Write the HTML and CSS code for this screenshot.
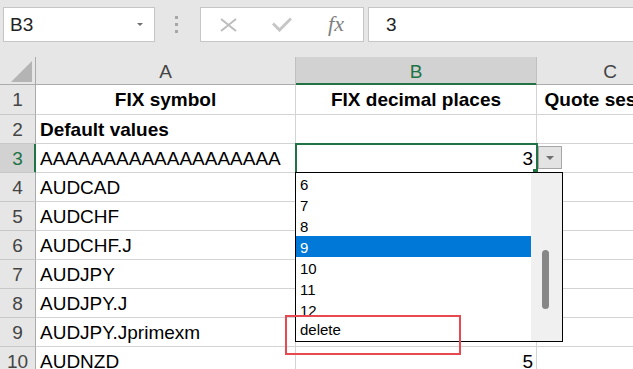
FILE: index.html
```html
<!DOCTYPE html>
<html lang="en">
<head>
  <meta charset="UTF-8">
  <title>FIX symbols</title>
  <link rel="stylesheet" href="styles.css">
</head>
<body>
  <div class="formula-bar">
    <div class="name-box"><span>B3</span><span class="caret"></span></div>
    <div class="grip"><i></i><i></i><i></i></div>
    <div class="fx-buttons">
      <span class="fx-btn">
        <svg width="17" height="14" viewBox="0 0 17 14"><path d="M1 1 L16 13 M16 1 L1 13" stroke="#bdbdbd" stroke-width="2" fill="none"/></svg>
      </span>
      <span class="fx-btn">
        <svg width="20" height="15" viewBox="0 0 20 15"><path d="M1 6.5 L7.5 13 L19 1.5" stroke="#c6c6c6" stroke-width="3" fill="none"/></svg>
      </span>
      <span class="fx-btn fx-label">fx</span>
    </div>
    <div class="formula-input">3</div>
  </div>

  <div class="sheet">
    <div class="grid">
      <div class="cell corner">
        <svg width="21" height="21" viewBox="0 0 21 21"><path d="M21 0 L21 21 L0 21 Z" fill="#b4b4b4"/></svg>
      </div>
      <div class="cell col-head">A</div>
      <div class="cell col-head active">B</div>
      <div class="cell col-head">C</div>

      <div class="cell row-head">1</div>
      <div class="cell b center">FIX symbol</div>
      <div class="cell b center">FIX decimal places</div>
      <div class="cell b center">Quote session</div>

      <div class="cell row-head">2</div>
      <div class="cell b">Default values</div>
      <div class="cell"></div>
      <div class="cell"></div>

      <div class="cell row-head active">3</div>
      <div class="cell">AAAAAAAAAAAAAAAAAAA</div>
      <div class="cell right current">3</div>
      <div class="cell"></div>

      <div class="cell row-head">4</div>
      <div class="cell">AUDCAD</div>
      <div class="cell"></div>
      <div class="cell"></div>

      <div class="cell row-head">5</div>
      <div class="cell">AUDCHF</div>
      <div class="cell"></div>
      <div class="cell"></div>

      <div class="cell row-head">6</div>
      <div class="cell">AUDCHF.J</div>
      <div class="cell"></div>
      <div class="cell"></div>

      <div class="cell row-head">7</div>
      <div class="cell">AUDJPY</div>
      <div class="cell"></div>
      <div class="cell"></div>

      <div class="cell row-head">8</div>
      <div class="cell">AUDJPY.J</div>
      <div class="cell"></div>
      <div class="cell"></div>

      <div class="cell row-head">9</div>
      <div class="cell">AUDJPY.Jprimexm</div>
      <div class="cell"></div>
      <div class="cell"></div>

      <div class="cell row-head">10</div>
      <div class="cell">AUDNZD</div>
      <div class="cell right">5</div>
      <div class="cell"></div>
    </div>

    <div class="dd-btn"></div>

    <div class="picklist">
      <ul>
        <li>6</li>
        <li>7</li>
        <li>8</li>
        <li class="sel">9</li>
        <li>10</li>
        <li>11</li>
        <li class="cut">12</li>
        <li class="last">delete</li>
      </ul>
      <div class="track"><div class="thumb"></div></div>
    </div>

    <div class="callout"></div>
  </div>
</body>
</html>
```

FILE: styles.css
```css
html, body {
  margin: 0;
  overflow: hidden;
}
body {
  font-family: "Liberation Sans", Arial, sans-serif;
  background: #fff;
  color: #000;
}

/* formula bar */
.formula-bar {
  height: 57px;
  box-sizing: border-box;
  padding-top: 7px;
  background: #e6e6e6;
  display: flex;
  align-items: flex-start;
}
.name-box {
  margin-left: 3px;
  width: 152px;
  height: 35px;
  box-sizing: border-box;
  border: 1px solid #c6c6c6;
  background: #fff;
  display: flex;
  align-items: center;
  padding-left: 6px;
  font-size: 19px;
  color: #222;
}
.caret {
  margin-left: auto;
  margin-right: 11px;
  border-left: 3px solid transparent;
  border-right: 3px solid transparent;
  border-top: 3px solid #707070;
}
.grip {
  width: 45px;
  height: 35px;
  box-sizing: border-box;
  padding-right: 2px;
  display: flex;
  flex-direction: column;
  align-items: center;
  justify-content: center;
  gap: 4px;
}
.grip i {
  width: 3px;
  height: 3px;
  background: #a6a6a6;
}
.fx-buttons {
  width: 164px;
  height: 35px;
  box-sizing: border-box;
  border: 1px solid #c6c6c6;
  background: #fff;
  display: flex;
}
.fx-btn {
  flex: 1;
  display: flex;
  align-items: center;
  justify-content: center;
}
.fx-label {
  font-family: "Liberation Serif", "Times New Roman", serif;
  font-style: italic;
  font-size: 22px;
  color: #7f7f7f;
  padding-bottom: 2px;
}
.formula-input {
  flex: 1;
  margin-left: 4px;
  height: 35px;
  box-sizing: border-box;
  border: 1px solid #c6c6c6;
  border-right: none;
  background: #fff;
  padding-left: 17px;
  font-size: 19px;
  line-height: 33px;
  color: #222;
}

/* sheet */
.sheet {
  position: relative;
}
.grid {
  display: grid;
  grid-template-columns: 36px 260px 241px 147px;
  grid-template-rows: 28px 30px repeat(9, 29px);
}
.cell {
  box-sizing: border-box;
  border-right: 1px solid #d4d4d4;
  border-bottom: 1px solid #d4d4d4;
  padding: 0 4px;
  font-size: 19px;
  line-height: 30px;
  white-space: nowrap;
  overflow: hidden;
}
.b { font-weight: bold; }
.center { text-align: center; }
.right { text-align: right; padding-right: 3px; }

.corner {
  background: #e6e6e6;
  border-right-color: #ababab;
  border-bottom-color: #ababab;
  display: flex;
  align-items: flex-end;
  justify-content: flex-end;
  padding: 0 3px 2px 0;
}
.corner svg { display: block; }
.col-head {
  background: #e6e6e6;
  border-right-color: #c0c0c0;
  border-bottom-color: #ababab;
  text-align: center;
  color: #444;
}
.col-head.active {
  background: #d2d2d2;
  color: #217346;
  border-bottom-color: #217346;
  box-shadow: inset 0 -1px 0 #217346;
}
.row-head {
  background: #e6e6e6;
  border-right-color: #ababab;
  border-bottom-color: #c8c8c8;
  text-align: center;
  color: #444;
  padding: 0;
}
.row-head.active {
  background: #d2d2d2;
  color: #217346;
  box-shadow: inset -1px 0 0 #217346;
  border-right-color: #217346;
}
.current {
  position: relative;
  overflow: visible;
  outline: 2px solid #217346;
  outline-offset: -1px;
}
.current::after {
  content: "";
  position: absolute;
  right: -2px;
  bottom: -1px;
  width: 5px;
  height: 4px;
  background: #217346;
}

/* in-cell dropdown */
.dd-btn {
  position: absolute;
  left: 538px;
  top: 89px;
  width: 24px;
  height: 23px;
  box-sizing: border-box;
  border: 1px solid #a6a6a6;
  background: #e3e3e3;
  display: flex;
  align-items: center;
  justify-content: center;
  z-index: 2;
}
.dd-btn::before {
  content: "";
  border-left: 4px solid transparent;
  border-right: 4px solid transparent;
  border-top: 4px solid #6f6f6f;
}
.picklist {
  position: absolute;
  left: 295px;
  top: 115px;
  width: 268px;
  height: 170px;
  box-sizing: border-box;
  border: 1px solid #000;
  background: #fff;
  display: flex;
  z-index: 3;
  font-size: 15px;
}
.picklist ul {
  list-style: none;
  margin: 0;
  padding: 0;
  width: 235px;
}
.picklist li {
  height: 21px;
  box-sizing: border-box;
  padding: 2px 0 0 4px;
  line-height: 19px;
  overflow: hidden;
}
.picklist li.sel {
  background: #0078d7;
  color: #fff;
}
.picklist li.cut { height: 16px; }
.picklist li.last {
  height: 25px;
  padding-top: 5px;
  line-height: 20px;
}
.track {
  flex: 1;
  background: #f0f0f0;
  padding: 77px 0 0 11px;
}
.thumb {
  width: 7px;
  height: 59px;
  border-radius: 4px;
  background: #878787;
}

/* annotation */
.callout {
  position: absolute;
  left: 285px;
  top: 258px;
  width: 176px;
  height: 40px;
  box-sizing: border-box;
  border: 2px solid #e8484f;
  z-index: 4;
}
```
